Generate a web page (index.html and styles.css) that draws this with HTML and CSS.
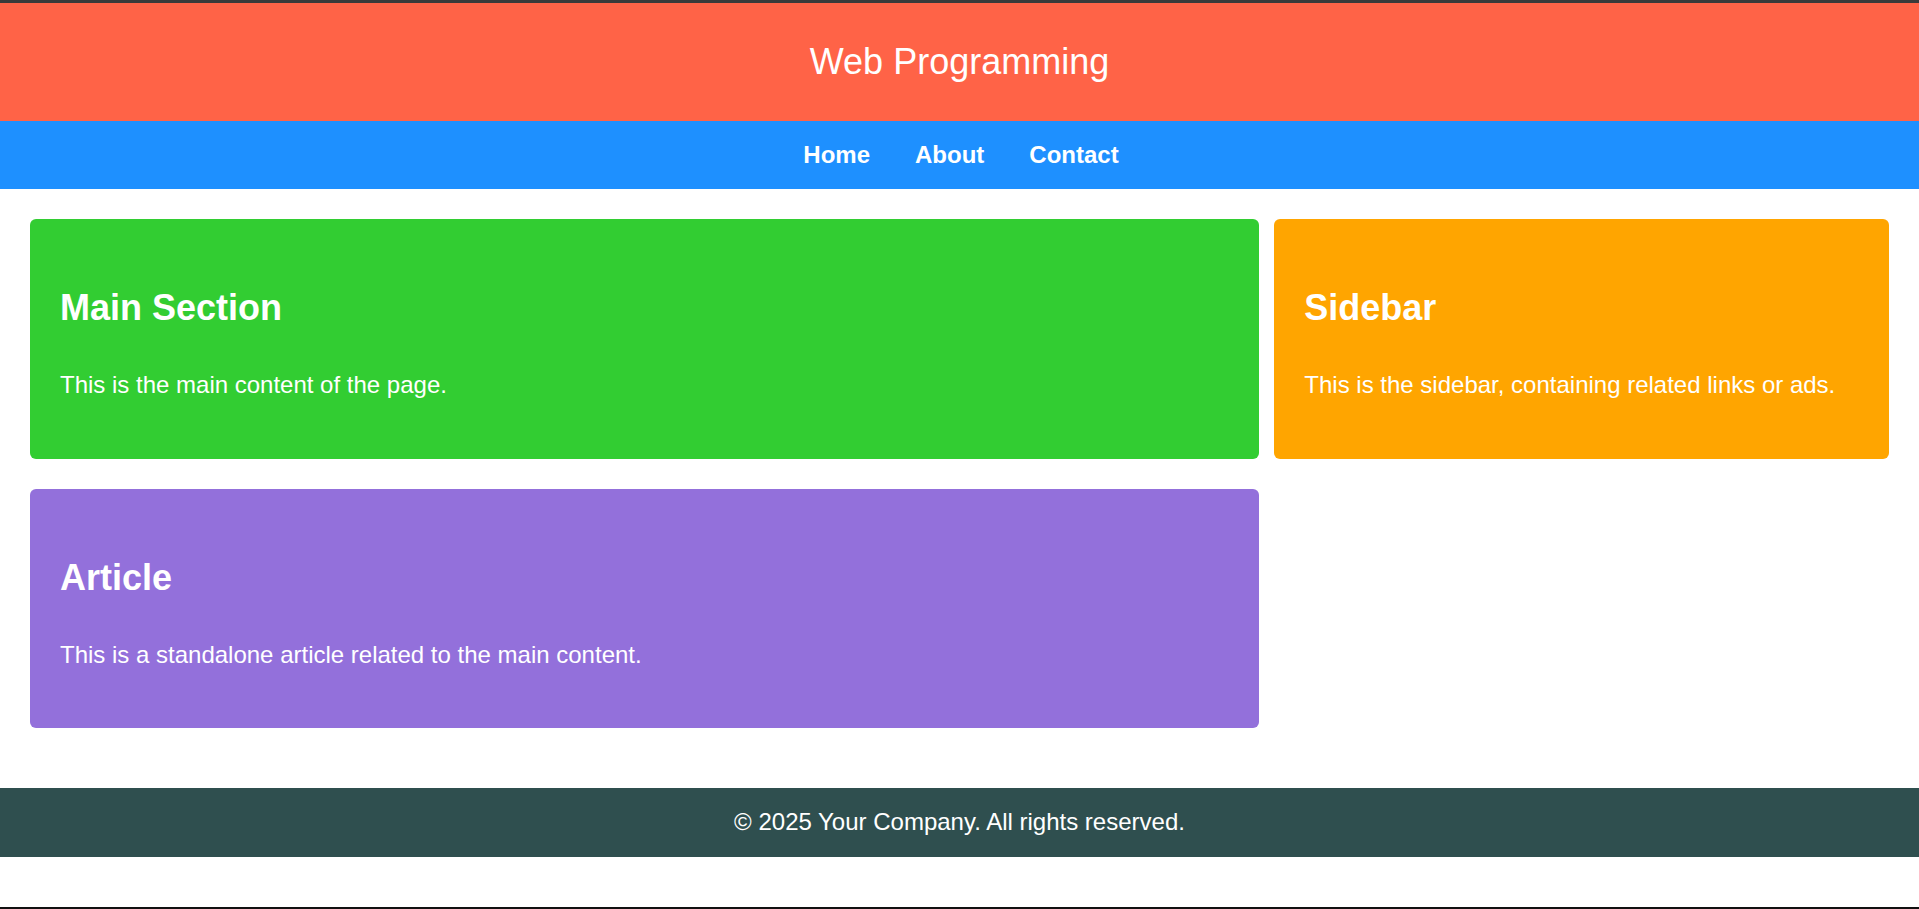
FILE: index.html
```html
<!DOCTYPE html>
<html lang="en">
<head>
<meta charset="UTF-8">
<title>Web Programming</title>
<link rel="stylesheet" href="styles.css">
</head>
<body>
<header class="site-header">
  <h1 class="site-title">Web Programming</h1>
</header>
<nav class="site-nav">
  <a class="nav-link" href="#">Home</a>
  <a class="nav-link" href="#">About</a>
  <a class="nav-link" href="#">Contact</a>
</nav>
<main class="layout">
  <section class="card card-main">
    <h2 class="card-title">Main Section</h2>
    <p class="card-text">This is the main content of the page.</p>
  </section>
  <aside class="card card-sidebar">
    <h2 class="card-title">Sidebar</h2>
    <p class="card-text">This is the sidebar, containing related links or ads.</p>
  </aside>
  <article class="card card-article">
    <h2 class="card-title">Article</h2>
    <p class="card-text">This is a standalone article related to the main content.</p>
  </article>
</main>
<footer class="site-footer">
  <p class="footer-text">&copy; 2025 Your Company. All rights reserved.</p>
</footer>
</body>
</html>
```
FILE: styles.css
```css
html {
  height: 100%;
}

body {
  margin: 0;
  min-height: 100vh;
  box-sizing: border-box;
  border-top: 3px solid #3a3a3a;
  border-bottom: 2px solid #111;
  position: relative;
  font-family: "Liberation Sans", Arial, sans-serif;
  line-height: 1.6;
  color: #fff;
  background: #fff;
}

body::before {
  content: "";
  position: absolute;
  top: -3px;
  left: 321px;
  width: 6px;
  height: 2px;
  background: #b9c6f2;
}

.site-header {
  background: #ff6347;
  padding: 30px 0;
  text-align: center;
}

.site-title {
  margin: 0;
  font-size: 36px;
  font-weight: normal;
}

.site-nav {
  background: #1e90ff;
  padding: 15px 0;
  display: flex;
  justify-content: center;
  gap: 45px;
  padding-left: 3px;
}

.nav-link {
  color: #fff;
  text-decoration: none;
  font-weight: bold;
  font-size: 24px;
}

.layout {
  display: grid;
  grid-template-columns: 2fr 1fr;
  column-gap: 15px;
  row-gap: 30px;
  padding: 30px;
}

.card {
  padding: 30px;
  border-radius: 6px;
}

.card-main {
  background: #32cd32;
}

.card-sidebar {
  background: #ffa500;
}

.card-article {
  background: #9370db;
  grid-column: 1;
}

.card-title {
  font-size: 36px;
  margin: 0.83em 0;
}

.card-text {
  font-size: 24px;
  margin: 24px 0;
}

.site-footer {
  background: #2f4f4f;
  margin-top: 30px;
  padding: 15px 0;
  text-align: center;
}

.footer-text {
  margin: 0;
  font-size: 24px;
}
```
